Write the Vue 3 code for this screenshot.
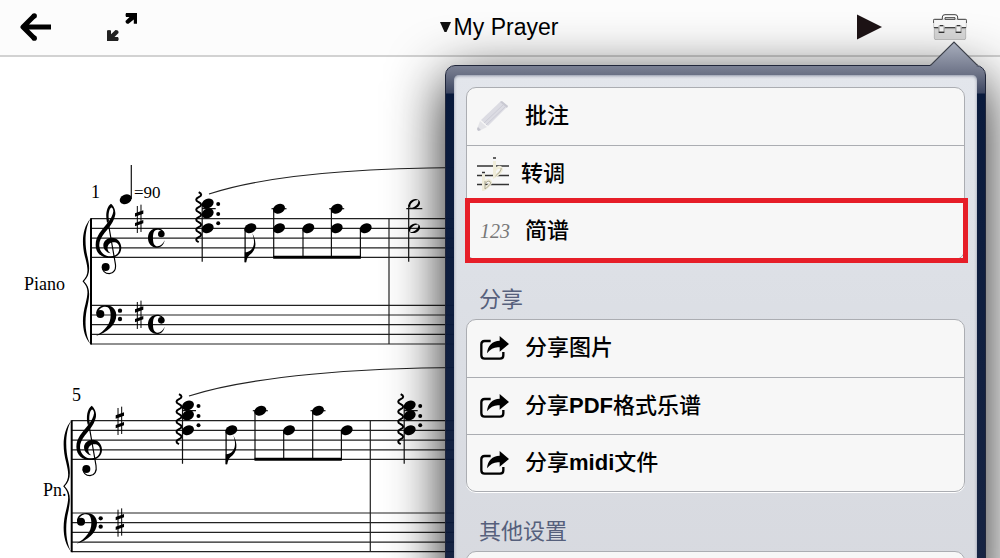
<script setup>
const staffLines = [0, 9.7, 19.4, 29.1, 38.7]

const systems = [
  {
    x: 91, top: 218.7, bass: 305.3, barline: 389, time: true,
    number: '1', numberX: 91, numberY: 198, part: 'Piano', partX: 24, partY: 290,
    chords: [207.7], eighth: 250.3,
    beamed: [
      { x: 279, heads: [-10, 9.6] },
      { x: 308.3, heads: [9.6] },
      { x: 336.7, heads: [-10, 9.6] },
      { x: 365.7, heads: [9.6] }
    ],
    half: 414.3,
    slur: 'M209 194 C270 174 365 168 460 167.5'
  },
  {
    x: 71.7, top: 420.7, bass: 513, barline: 370.3, time: false,
    number: '5', numberX: 72, numberY: 401, part: 'Pn.', partX: 43, partY: 496,
    chords: [188, 409.7], eighth: 231.3,
    beamed: [
      { x: 260.3, heads: [-10] },
      { x: 289, heads: [9.6] },
      { x: 318, heads: [-10] },
      { x: 346.7, heads: [9.6] }
    ],
    half: null,
    slur: 'M189 396 C250 376 365 367.5 460 367.5'
  }
]

const tools = [
  { label: '批注', icon: 'pencil' },
  { label: '转调', icon: 'transpose' },
  { label: '简谱', icon: 'numbers' }
]

const shares = [
  ['分享图片', '', ''],
  ['分享', 'PDF', '格式乐谱'],
  ['分享', 'midi', '文件']
]
</script>

<template>
  <div class="page">
    <header class="bar">
      <div class="side">
        <button class="tool" aria-label="Back">
          <svg width="32" height="28" viewBox="0 0 32 28">
            <path d="M14.500 2.500L3 14l11.500 11.500M4 14H31" fill="none" stroke="#000" stroke-width="5" stroke-linejoin="round" />
            <circle cx="14.300" cy="2.800" r="2.600" /><circle cx="14.300" cy="25.200" r="2.600" />
          </svg>
        </button>
        <button class="tool" aria-label="Full screen">
          <svg width="31" height="28" viewBox="0 0 31 28">
            <path d="M19 0H30V10.800H26.800V6.500L21.500 10.800Q18.500 11 18.500 8L22.500 4H19Q18 2 19 0Z" />
            <path d="M0 17.500Q2 16.500 4 17.500V21.300L8.500 17Q12 17 11.500 20L7.500 24H11Q12.500 26 11 28H0Z" fill="#222" />
          </svg>
        </button>
      </div>
      <button class="title">
        <svg width="11" height="10" viewBox="0 0 11 10"><path d="M0 0H11L6.500 10H4.500Z" fill="#111" /></svg>
        <span>My Prayer</span>
      </button>
      <div class="side side-end">
        <button class="tool" aria-label="Play">
          <svg width="25" height="26" viewBox="0 0 25 26"><path d="M0 0.500L25 13L0 25.500Z" fill="#1d1315" /></svg>
        </button>
        <button class="tool" aria-label="Toolbox">
          <svg width="34" height="26" viewBox="0 0 102 78">
            <path d="M4 44H98V72Q98 77 93 77H9Q4 77 4 72Z" fill="#d9d9d9" stroke="#a8a8a8" stroke-width="2" />
            <path d="M2 18Q2 16 5 16H97Q100 16 100 18V42H2Z" fill="#f8f8f8" stroke="#bbb" stroke-width="2" />
            <path d="M1 27V19Q1 16 5 16H28V9Q28 2 36 2H66Q74 2 74 9V16H97Q101 16 101 19V27M36 16V11H66V16Z" fill="none" stroke="#444" stroke-width="3" />
            <path d="M3 41H16M35 41H67M86 41H99" stroke="#444" stroke-width="4" />
            <path d="M18 35H33V54H18ZM69 35H84V54H69Z" fill="#f5f5f5" stroke="#777" stroke-width="2" />
            <path d="M17 55H34M68 55H85M21 35H30M72 35H81" stroke="#333" stroke-width="4" />
          </svg>
        </button>
      </div>
    </header>

    <main class="score">
      <svg class="sheet" viewBox="0 57 1000 501" role="img" aria-label="My Prayer">
        <defs>
          <g id="treble">
            <path d="M303 131C312 137 319 155 315 168C309 192 293 207 283 220C273 234 267 245 268 258C270 278 285 290 303 289C320 288 328 278 328 264C328 250 318 245 307 247C297 249 291 258 293 268C294 274 298 278 302 280C290 279 280 268 280 256C280 243 292 233 306 233C322 233 334 247 334 263C334 282 318 294 300 294C276 294 257 280 257 254C257 228 276 210 290 192C302 178 309 165 310 154C310 147 306 142 303 143C297 147 294 166 297 182L291 188C286 166 289 140 303 131Z" />
            <path d="M277 322C278 335 287 341 298 341C312 340 319 328 316 311L294 184" fill="none" stroke="#000" stroke-width="3.500" />
            <circle cx="287" cy="321" r="12" />
          </g>
          <g id="bass">
            <path d="M259 462C258 446 271 436 288 436C306 436 319 448 319 466C319 495 290 518 258 528C285 512 302 492 302 466C302 450 297 440 286 440C274 440 266 448 265 456Z" />
            <circle cx="271" cy="462" r="12" /><circle cx="330" cy="452" r="6.500" /><circle cx="330" cy="477" r="6.500" />
          </g>
          <g id="sharp">
            <path d="M382 138V219M393 134V216" fill="none" stroke="#000" stroke-width="3" />
            <path d="M375 160L400 151V161L375 170ZM375 189L400 180V190L375 199Z" />
          </g>
          <g id="common">
            <path d="M463 222C461 210 451 205 441 205C425 205 414 217 414 234C414 251 425 263 441 263C453 263 462 254 464 241C459 252 452 259 443 259C431 259 429 246 429 234C429 221 431 209 442 209C448 209 452 211 455 214Z" />
            <circle cx="454" cy="222" r="10" />
          </g>
          <path id="brace" d="M8 0C-1 10-1 26 3 40C6 52 6 56 0 62.500C6 69 6 73 3 85C-1 99-1 115 8 125C2 115 2 99 5 87C8 74 7 68 1.500 62.500C7 57 8 51 5 38C2 26 2 10 8 0Z" />
          <path id="roll" d="M0 0q5 2.500 0 5t0 5t0 5t0 5t0 5t0 5t0 5t0 5t0 5t0 5" />
        </defs>

        <g v-for="s in systems" :key="s.number">
          <g stroke="#222" stroke-width="1.200" fill="none">
            <path v-for="l in staffLines" :key="l" :d="`M${s.x} ${s.top + l}H460M${s.x} ${s.bass + l}H460`" />
            <path :d="`M${s.barline} ${s.top}V${s.bass + 38.7}`" />
            <path :d="s.slur" />
          </g>
          <path :d="`M${s.x} ${s.top - 0.5}V${s.bass + 39.2}`" stroke="#000" stroke-width="2" />
          <use href="#brace" :transform="`translate(${s.x - 8.5} ${s.top}) scale(1 ${(s.bass + 38.7 - s.top) / 125})`" />

          <g :transform="`translate(${s.x - 81} ${s.top - 58.7}) scale(.3333)`">
            <use href="#treble" /><use href="#sharp" /><use v-if="s.time" href="#common" />
          </g>
          <g :transform="`translate(${s.x - 81} ${s.bass - 145.3}) scale(.3333)`">
            <use href="#bass" /><use href="#sharp" y="288" /><use v-if="s.time" href="#common" y="259" />
          </g>

          <g v-for="c in s.chords" :key="c" :transform="`translate(${c} ${s.top})`">
            <use href="#roll" x="-9" y="-26.500" fill="none" stroke="#000" stroke-width="2" />
            <path d="M-5.500 -15V43M-6 -10H8" stroke="#111" stroke-width="1.200" />
            <template v-for="y in [-15.2, -5.3, 9.6]" :key="y">
              <ellipse :cy="y" rx="6.200" ry="4.700" :transform="`rotate(-24 0 ${y})`" />
              <circle cx="10.500" :cy="y > 0 ? 4.6 : y + 0.6" r="2" />
            </template>
          </g>

          <g :transform="`translate(${s.eighth} ${s.top + 9.6})`">
            <ellipse rx="6.200" ry="4.700" transform="rotate(-24)" />
            <path d="M-5.200 1V34" stroke="#000" stroke-width="1.200" />
            <path d="M2 5C7 14 6 22-1 27C-3 29-3.500 31-4 34H-5.500V24C0 24 7 19 2 5Z" />
          </g>

          <g v-for="n in s.beamed" :key="n.x" :transform="`translate(${n.x} ${s.top})`">
            <path :d="`M-5.300 ${n.heads[0]}V38.500`" stroke="#111" stroke-width="1.200" />
            <path v-if="n.heads[0] < 0" d="M-7.500 -10H7.500" stroke="#111" stroke-width="1.200" />
            <ellipse v-for="y in n.heads" :key="y" :cy="y" rx="6.200" ry="4.700" :transform="`rotate(-24 0 ${y})`" />
          </g>
          <path :d="`M${s.beamed[0].x - 5.8} ${s.top + 38.6}H${s.beamed[3].x - 4.8}`" stroke="#000" stroke-width="3" />

          <g v-if="s.half" :transform="`translate(${s.half} ${s.top})`">
            <path d="M-5.600 -14V43M-8 -10H8" stroke="#111" stroke-width="1.200" />
            <g v-for="y in [-14.8, 9.6]" :key="y" :transform="`translate(0 ${y}) rotate(-24)`">
              <path fill-rule="evenodd" d="M-6 0A6 4.500 0 1 0 6 0A6 4.500 0 1 0-6 0ZM-5.200 1.800C-4-2.500 2-3.600 5.200-1.800C4 2.500-2 3.600-5.200 1.800Z" />
            </g>
          </g>

          <text :x="s.numberX" :y="s.numberY" font-size="18">{{ s.number }}</text>
          <text :x="s.partX" :y="s.partY" font-size="18">{{ s.part }}</text>
        </g>

        <ellipse cx="125.700" cy="199.300" rx="6.200" ry="4.700" transform="rotate(-24 125.700 199.300)" />
        <path d="M131.300 165V199" stroke="#111" stroke-width="1.200" />
        <text x="134" y="198" font-size="17">=90</text>
      </svg>
    </main>

    <aside class="popover" aria-label="Tools">
      <svg class="arrow" width="48" height="25" viewBox="0 0 48 25">
        <defs>
          <linearGradient id="tip" x1="0" y1="0" x2="0" y2="1">
            <stop offset="0" stop-color="#a9afbd" /><stop offset="1" stop-color="#7b8194" />
          </linearGradient>
        </defs>
        <path d="M0 25L1 24L24 1L47 24L48 25Z" fill="url(#tip)" />
        <path d="M0 24H1L24 1L47 24H48" fill="none" stroke="#3c404a" stroke-width="1.200" />
      </svg>
      <div class="panel">
        <div class="group">
          <button v-for="t in tools" :key="t.icon" class="row" :class="t.icon">
            <span class="icon">
              <svg v-if="t.icon === 'pencil'" width="32" height="30" viewBox="0 0 32 30">
                <path d="M24 0L31 5L11 25L4 19Z" fill="#dcdce3" />
                <path d="M23 1L25 0L31 5L30 7Z" fill="#c9c9d2" />
                <path d="M26 4L7 22M28 6L9 24" stroke="#cdcdd7" stroke-width="1" />
                <path d="M3 20L10 26L2 30L0 28Z" fill="#e4e4e8" /><path d="M1 26L4 29L1 30L0 28Z" fill="#c4c4cd" />
              </svg>
              <svg v-else-if="t.icon === 'transpose'" width="33" height="34" viewBox="0 0 33 34">
                <path d="M0 9H32M0 18.500H32M0 27.500H32" stroke="#333" stroke-width="1.500" />
                <path d="M6.500 17V32.500C11 30 15 26 13 24C11 22.500 8 24 7 26.500M17.500 4V19.500C22 17 26 13 24 11C22 9.500 19 11 18 13.500" fill="none" stroke="#f0edda" stroke-width="3" />
                <path d="M8 24V32C12 29 15 26 13 24.500C11 23.500 9 25 8 27M24 11C25 13 21 17 18.500 19" fill="none" stroke="#aaa68f" stroke-width="1" />
                <path d="M5 15.500H8M16 1H19" stroke="#333" stroke-width="1.500" />
              </svg>
              <i v-else class="digits">123</i>
            </span>
            <span>{{ t.label }}</span>
          </button>
        </div>
        <h2>分享</h2>
        <div class="group">
          <button v-for="(p, i) in shares" :key="i" class="row">
            <span class="icon share">
              <svg width="29" height="24" viewBox="0 0 87 72">
                <path d="M32 15H14Q4 15 4 25V58Q4 68 14 68H60Q70 68 70 58V48" fill="none" stroke="#000" stroke-width="7" />
                <path d="M59 0L87 24L59 47V34C44 32 32 38 21 52C23 28 37 15 59 14Z" />
              </svg>
            </span>
            <span>{{ p[0] }}<b v-if="p[1]">{{ p[1] }}</b>{{ p[2] }}</span>
          </button>
        </div>
        <h2>其他设置</h2>
        <div class="group rest"></div>
      </div>
    </aside>
  </div>
</template>

<style>
body {
  margin: 0;
}
</style>

<style scoped>
.page {
  position: relative;
  display: flex;
  flex-direction: column;
  height: 100vh;
  overflow: hidden;
  background: #fff;
  font-family: "Liberation Sans", "Noto Sans CJK SC", sans-serif;
  color: #000;
}
button {
  margin: 0;
  padding: 0;
  border: 0;
  background: none;
  color: inherit;
  font: inherit;
  text-align: left;
}
svg {
  display: block;
}
.bar {
  display: grid;
  grid-template-columns: 1fr auto 1fr;
  align-items: center;
  box-sizing: border-box;
  height: 57px;
  flex: none;
  padding: 0 33px 2px 20px;
  background: #fcfcfc;
  border-bottom: 2px solid #d2d2d2;
}
.side {
  display: flex;
  align-items: center;
  gap: 55px;
}
.side-end {
  justify-content: flex-end;
  gap: 51px;
}
.title {
  display: flex;
  align-items: center;
  gap: 3px;
  padding-left: 11px;
  font-size: 23px;
  line-height: 28px;
}
.score {
  flex: 1;
  min-height: 0;
}
.sheet {
  width: 100%;
  font-family: "Liberation Serif", serif;
}
.popover {
  position: absolute;
  top: 65px;
  right: 14px;
  bottom: -40px;
  left: 44.5%;
  box-sizing: border-box;
  padding: 9px 8px;
  border: 1px solid #20263a;
  border-radius: 10px;
  background: linear-gradient(#7b8194 0, #6c7286 8px, #3c4661 27px, #091a3c 28px, #0b1939f2 100%);
  box-shadow: 0 14px 56px rgba(0, 0, 0, 0.88);
}
.arrow {
  position: absolute;
  right: 7px;
  top: -25px;
}
.panel {
  display: flex;
  flex-direction: column;
  box-sizing: border-box;
  height: 100%;
  padding: 12px;
  border-radius: 5px;
  background: linear-gradient(#e3e6ec, #dcdfe5 45%, #d7d9df);
  box-shadow: inset 0 1px 3px rgba(60, 70, 100, 0.5);
}
.group {
  border: 1px solid #abadb2;
  border-radius: 10px;
  background: #f7f7f7;
  box-shadow: 0 1px 0 #fff;
}
.rest {
  flex: 1;
}
.row {
  position: relative;
  display: flex;
  align-items: center;
  box-sizing: border-box;
  width: 100%;
  height: 57px;
  padding-bottom: 1px;
  font-size: 22px;
  line-height: 32px;
  font-weight: 500;
}
.row + .row {
  border-top: 1px solid #abadb2;
}
.icon {
  box-sizing: border-box;
  width: 58px;
  padding-left: 10px;
}
.transpose .icon {
  width: 54px;
}
.numbers .icon,
.share {
  padding-left: 13px;
}
.digits {
  font-family: "Liberation Serif", serif;
  font-size: 20px;
  font-weight: 400;
  color: #777;
}
.numbers::after {
  content: "";
  position: absolute;
  inset: -5px -4px -4px -2px;
  border: 5px solid #e61e28;
}
h2 {
  margin: 0;
  padding: 24px 0 3px 13px;
  font-size: 22px;
  line-height: 32px;
  font-weight: 400;
  color: #56607c;
}
</style>
